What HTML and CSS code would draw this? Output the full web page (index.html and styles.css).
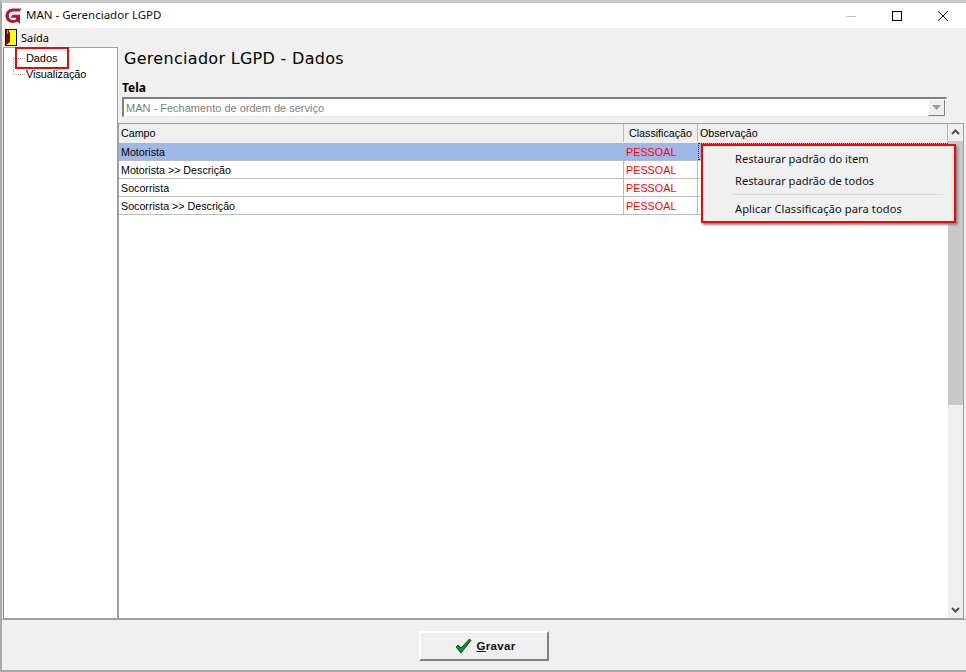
FILE: index.html
```html
<!DOCTYPE html>
<html lang="pt-BR">
<head>
<meta charset="utf-8">
<title>MAN - Gerenciador LGPD</title>
<link rel="stylesheet" href="styles.css">
</head>
<body>
<div class="window">
  <header class="titlebar">
    <svg class="app-logo" width="17" height="17" viewBox="0 0 17 17"><path d="M16.500 1.500H8C3.800 1.500.5 4.600.5 8.800c0 4.300 3.200 7.200 7.200 7.200 1.900 0 3.400-.5 4.700-1.200L15 17V7.700H7.400L5.800 10.700h5.200v1.700c-.9.400-1.900.6-3 .6-2.500 0-4.200-1.700-4.200-4.300 0-2.500 1.700-4.200 4-4.200h7z" fill="#b3182f"/></svg>
    <span class="title-text">MAN - Gerenciador LGPD</span>
    <div class="win-controls">
      <svg class="win-btn" width="46" height="20" viewBox="0 0 46 20"><path d="M19 10.500h10" stroke="#c4c4c4" fill="none"/></svg>
      <svg class="win-btn" width="46" height="20" viewBox="0 0 46 20"><rect x="19.500" y="5.500" width="9" height="9" stroke="#000" fill="none"/></svg>
      <svg class="win-btn" width="46" height="20" viewBox="0 0 46 20"><path d="M19 5l10 10M29 5L19 15" stroke="#111" fill="none"/></svg>
    </div>
  </header>
  <nav class="menubar">
    <svg width="12" height="17" viewBox="0 0 12 17"><rect width="12" height="17" fill="#111"/><rect x="1" y="1" width="10" height="15" fill="#ffff1e"/><path d="M1 1h3v2l1 1v9l-4 3z" fill="#7a0c0c"/><rect x="2" y="1" width="1" height="4" fill="#18c8d8"/></svg>
    <span class="menu-label">Saída</span>
  </nav>
  <div class="main">
    <aside class="tree">
      <div class="tree-item first"><span class="tree-dots"></span><span class="tree-label">Dados</span></div>
      <div class="tree-item"><span class="tree-dots"></span><span class="tree-label">Visualização</span></div>
      <span class="mark-dados"></span>
    </aside>
    <section class="content">
      <h1 class="page-title">Gerenciador LGPD - Dados</h1>
      <label class="field-label">Tela</label>
      <div class="combo">
        <span class="combo-text">MAN - Fechamento de ordem de serviço</span>
        <span class="combo-btn"><svg width="9" height="5" viewBox="0 0 9 5"><path d="M0 0h9L4.500 5z" fill="#9a9a9a"/></svg></span>
      </div>
      <div class="grid-box">
        <div class="grid-area">
          <div class="row head">
            <div class="cell c1">Campo</div><div class="cell c2 ind">Classificação</div><div class="cell c3">Observação</div>
          </div>
          <div class="row selected">
            <div class="cell c1">Motorista</div><div class="cell c2 red">PESSOAL</div><div class="cell c3 focus"></div>
          </div>
          <div class="row">
            <div class="cell c1">Motorista &gt;&gt; Descrição</div><div class="cell c2 red">PESSOAL</div><div class="cell c3"></div>
          </div>
          <div class="row">
            <div class="cell c1">Socorrista</div><div class="cell c2 red">PESSOAL</div><div class="cell c3"></div>
          </div>
          <div class="row">
            <div class="cell c1">Socorrista &gt;&gt; Descrição</div><div class="cell c2 red">PESSOAL</div><div class="cell c3"></div>
          </div>
        </div>
        <div class="scrollbar">
          <svg class="arrow" width="15" height="17" viewBox="0 0 15 17"><path d="M4 10l3.500-3.500L11 10" stroke="#505050" stroke-width="2" fill="none"/></svg>
          <div class="track"><div class="thumb"></div></div>
          <svg class="arrow" width="15" height="17" viewBox="0 0 15 17"><path d="M4 7l3.500 3.500L11 7" stroke="#505050" stroke-width="2" fill="none"/></svg>
        </div>
      </div>
      <div class="context-menu">
        <div class="menu-item">Restaurar padrão do item</div>
        <div class="menu-item second">Restaurar padrão de todos</div>
        <div class="menu-sep"></div>
        <div class="menu-item wide">Aplicar Classificação para todos</div>
      </div>
    </section>
  </div>
  <footer class="footer">
    <button class="save-btn">
      <svg width="17" height="16" viewBox="0 0 17 16"><path d="M1 9l2-2 3 3 8.500-9L16 2.500 6 15z" fill="#0a9a1c" stroke="#05204a" stroke-width=".8"/></svg>
      <span class="save-label"><u>G</u>ravar</span>
    </button>
  </footer>
</div>
</body>
</html>
```
FILE: styles.css
```css
* { box-sizing: border-box; }
html, body { margin: 0; height: 100%; overflow: hidden; }
body { background: #fff; font-family: "Liberation Sans", Arial, sans-serif; font-size: 11px; color: #000; }
.window { width: 966px; height: 672px; display: flex; flex-direction: column; background: #f0f0f0; border-top: 3px solid #c8c8c8; border-left: 2px solid #a9a9a9; border-bottom: 2px solid #a9a9a9; }
.titlebar { height: 25px; flex: none; background: #fff; display: flex; align-items: center; padding-left: 3px; padding-right: 1px; }
.app-logo { flex: none; }
.title-text { margin: 0 0 2px 4px; font-family: "Noto Sans", sans-serif; font-size: 11.5px; color: #111; }
.win-controls { margin-left: auto; display: flex; }
.win-btn { display: block; }
.menubar { height: 19px; flex: none; display: flex; align-items: center; padding-left: 3px; gap: 4px; }
.menu-label { font-family: "Noto Sans", sans-serif; font-size: 11px; }
.main { flex: 1; display: flex; min-height: 0; padding-right: 1px; }
.tree { width: 115px; margin-left: 1px; flex: none; position: relative; background: #fff; border: 1px solid #a0a0a0; border-left: 1px solid #808080; padding-top: 2px; }
.tree::before { content: ""; position: absolute; left: 9px; top: 9px; height: 17px; border-left: 1px dotted #a8a8a8; }
.tree-item { height: 16px; display: flex; align-items: center; position: relative; }
.tree-dots { width: 11px; margin-left: 10px; border-top: 1px dotted #a8a8a8; }
.tree-label { margin-left: 1px; font-size: 11px; letter-spacing: -.1px; }
.mark-dados { position: absolute; left: 11px; top: -1px; width: 54px; height: 22px; border: 2px solid #f00; }
.content { flex: 1; position: relative; padding: 0 18px 0 0; min-width: 0; display: flex; flex-direction: column; }
.page-title { margin: 0 0 0 6px; height: 24px; font-family: "DejaVu Sans", sans-serif; font-size: 16px; font-weight: 400; line-height: 24px; letter-spacing: .3px; }
.field-label { margin: 10px 0 0 4px; height: 14px; line-height: 14px; font-family: "Noto Sans", sans-serif; font-size: 12px; font-weight: 700; }
.combo { margin: 2px 0 0 4px; height: 20px; background: #fff; border-top: 2px solid #808080; border-left: 2px solid #808080; border-right: 1px solid #e8e8e8; border-bottom: 1px solid #e8e8e8; display: flex; align-items: center; justify-content: space-between; }
.combo-text { padding-left: 2px; font-size: 11px; color: #7d7d7d; }
.combo-btn { width: 17px; height: 16px; background: #efefef; border-right: 1px solid #808080; border-bottom: 1px solid #808080; border-left: 1px solid #fff; display: flex; align-items: center; justify-content: center; margin-right: 1px; }
.grid-box { margin-top: 6px; flex: 1; min-height: 0; display: flex; margin-right: -17px; border: 1px solid #a0a0a0; background: #fff; }
.grid-area { flex: 1; min-width: 0; }
.row { display: flex; height: 18px; border-bottom: 1px solid #bcbcbc; }
.row.head { height: 19px; background: #efefef; border-bottom-color: #efefef; }
.row.head .c3 { border-right: 1px solid #b8b8b8; }
.cell { height: 100%; padding-left: 2px; line-height: 19px; font-size: 10.7px; border-right: 1px solid #b8b8b8; white-space: nowrap; overflow: hidden; }
.c1 { width: 505px; }
.c2 { width: 74px; }
.c2.ind { padding-left: 5px; }
.c3 { flex: 1; border-right: 0; }
.red { color: #f00; padding-left: 2px; font-size: 10.8px; }
.selected { background: #9db8e8; }
.focus { outline: 1px dotted #333; outline-offset: -1px; }
.scrollbar { width: 15px; flex: none; background: #efefef; display: flex; flex-direction: column; }
.arrow { display: block; flex: none; }
.track { flex: 1; }
.thumb { height: 264px; background: #c8c8c8; }
.context-menu { position: absolute; left: 583px; top: 97px; width: 255px; height: 79px; background: #f0f0f0; border: 2px solid #f00; box-shadow: 2px 2px 2px #8a8a8a; padding-top: 2px; }
.menu-item { height: 22px; line-height: 22px; padding-left: 32px; font-family: "Noto Sans", sans-serif; font-size: 11.1px; color: #111; }
.menu-item.second { margin-bottom: 2px; }
.menu-item.wide { letter-spacing: .1px; }
.menu-sep { margin: 0 11px 3px 30px; height: 1px; background: #d8d8d8; }
.footer { height: 51px; flex: none; background: #f0f0f0; border-top: 1px solid #a0a0a0; padding-top: 2px; display: flex; justify-content: center; align-items: center; }
.save-btn { width: 130px; height: 30px; padding: 0 0 0 2px; background: #efefef; border: 2px solid; border-color: #fff #808080 #808080 #fff; display: flex; align-items: center; justify-content: center; gap: 5px; font-family: "Liberation Sans", sans-serif; font-size: 11.5px; font-weight: 700; letter-spacing: .3px; color: #111; }
```
